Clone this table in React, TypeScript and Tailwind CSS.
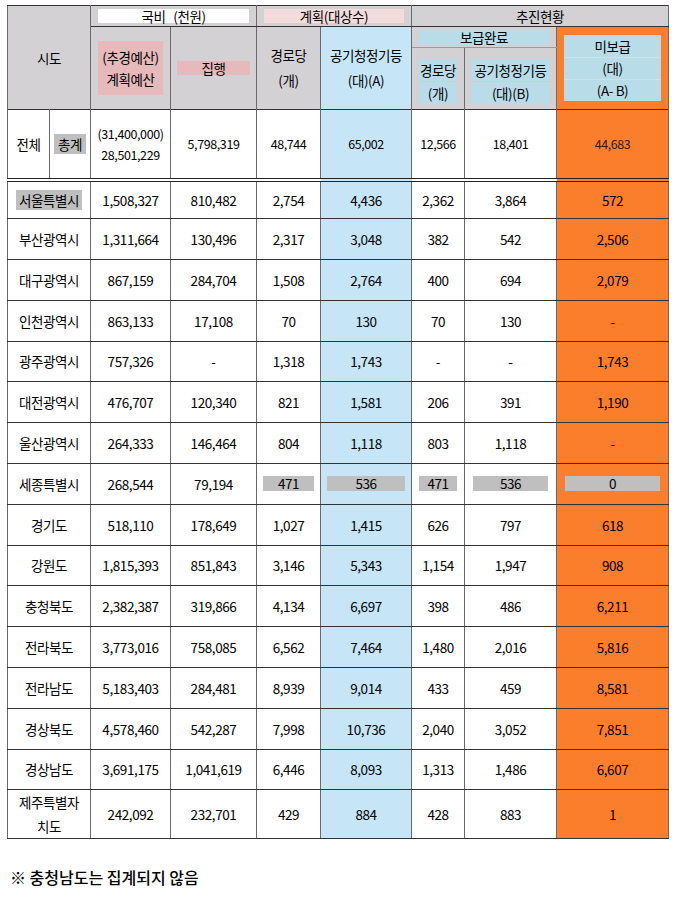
import React from "react";

const rows: string[][] = [
  ["서울특별시", "1,508,327", "810,482", "2,754", "4,436", "2,362", "3,864", "572"],
  ["부산광역시", "1,311,664", "130,496", "2,317", "3,048", "382", "542", "2,506"],
  ["대구광역시", "867,159", "284,704", "1,508", "2,764", "400", "694", "2,079"],
  ["인천광역시", "863,133", "17,108", "70", "130", "70", "130", "-"],
  ["광주광역시", "757,326", "-", "1,318", "1,743", "-", "-", "1,743"],
  ["대전광역시", "476,707", "120,340", "821", "1,581", "206", "391", "1,190"],
  ["울산광역시", "264,333", "146,464", "804", "1,118", "803", "1,118", "-"],
  ["세종특별시", "268,544", "79,194", "471", "536", "471", "536", "0"],
  ["경기도", "518,110", "178,649", "1,027", "1,415", "626", "797", "618"],
  ["강원도", "1,815,393", "851,843", "3,146", "5,343", "1,154", "1,947", "908"],
  ["충청북도", "2,382,387", "319,866", "4,134", "6,697", "398", "486", "6,211"],
  ["전라북도", "3,773,016", "758,085", "6,562", "7,464", "1,480", "2,016", "5,816"],
  ["전라남도", "5,183,403", "284,481", "8,939", "9,014", "433", "459", "8,581"],
  ["경상북도", "4,578,460", "542,287", "7,998", "10,736", "2,040", "3,052", "7,851"],
  ["경상남도", "3,691,175", "1,041,619", "6,446", "8,093", "1,313", "1,486", "6,607"],
];

const cell = "border border-x-[#6a6a6a] border-y-[#333] p-0 text-center align-middle font-normal";
const gray = "bg-[#d3d1d3]";
const blue = "bg-[#c6e6f8]";
const orange = "bg-[#fb7e2c]";
const dbl = "border-b-4 border-double border-b-[#222]";

// gray chip used in the 세종 row
function Chip({ text, w }: { text: string; w: string }) {
  return <div className={`mx-auto h-[15px] bg-[#bfbfbf] leading-[15px] ${w}`}>{text}</div>;
}

export default function App() {
  return (
    <div className="w-[680px] h-[899px] bg-white pt-[5px] pl-[7px] text-black font-['Noto_Sans_CJK_KR','Noto_Sans',sans-serif] tracking-[-0.4px]">
      <table className="table-fixed border-collapse w-[661px] text-[13.5px]">
        <colgroup>
          <col className="w-[42px]" />
          <col className="w-[41px]" />
          <col className="w-[80px]" />
          <col className="w-[86px]" />
          <col className="w-[64px]" />
          <col className="w-[91px]" />
          <col className="w-[53px]" />
          <col className="w-[92px]" />
          <col className="w-[112px]" />
        </colgroup>
        <thead>
          <tr className="h-[19px]">
            <th colSpan={2} rowSpan={3} className={`${cell} ${gray}`}>시도</th>
            <th colSpan={2} className={`${cell} ${gray}`}>
              <div className="mx-[7px] bg-white leading-[14px] whitespace-pre">국비   (천원)</div>
            </th>
            <th colSpan={2} className={`${cell} ${gray}`}>
              <div className="mx-[7px] bg-[#f3dcdc] leading-[14px]">계획(대상수)</div>
            </th>
            <th colSpan={3} className={`${cell} ${gray}`}>추진현황</th>
          </tr>
          <tr className="h-[21px]">
            <th rowSpan={2} className={`${cell} ${gray}`}>
              <div className="mx-[7px] bg-[#e6b9ba] py-[5px] leading-[22px]">
                (추경예산)
                <br />
                계획예산
              </div>
            </th>
            <th rowSpan={2} className={`${cell} ${gray}`}>
              <div className="mx-[6px] bg-[#e6b9ba] leading-[14px]">집행</div>
            </th>
            <th rowSpan={2} className={`${cell} ${gray} leading-[25px]`}>
              경로당
              <br />
              (개)
            </th>
            <th rowSpan={2} className={`${cell} ${blue} leading-[25px]`}>
              공기청정기등
              <br />
              (대)(A)
            </th>
            <th colSpan={2} className={`${cell} ${gray} border-b-[#9a9a9a]`}>
              <div className="mx-[7px] bg-[#b8dde8] leading-[15px]">보급완료</div>
            </th>
            <th rowSpan={2} className={`${cell} ${orange}`}>
              <div className="mx-[7px] bg-[#b8dde8] leading-[21px] pt-[1px]">
                <div className="border-b border-[#cde3ea]">미보급</div>
                <div className="border-b border-[#cde3ea]">(대)</div>
                <div>(A- B)</div>
              </div>
            </th>
          </tr>
          <tr className="h-[62px]">
            <th className={`${cell} ${gray} border-t-[#9a9a9a]`}>
              <div className="mx-[7px] mt-[6px] bg-[#b8dde8] leading-[22px]">
                <div className="border-b border-[#cfcfcf]">경로당</div>
                <div>(개)</div>
              </div>
            </th>
            <th className={`${cell} ${gray} border-t-[#9a9a9a]`}>
              <div className="mx-[6px] mt-[6px] bg-[#b8dde8] leading-[22px]">
                <div className="border-b border-[#cfcfcf]">공기청정기등</div>
                <div>(대)(B)</div>
              </div>
            </th>
          </tr>
        </thead>
        <tbody>
          <tr className="h-[70px] text-[12.5px]">
            <td className={`${cell} text-[13.5px] ${dbl}`}>전체</td>
            <td className={`${cell} text-[13.5px] ${dbl}`}>
              <span className="bg-[#bfbfbf] px-[4px]">총계</span>
            </td>
            <td className={`${cell} ${dbl} leading-[21px]`}>
              (31,400,000)
              <br />
              28,501,229
            </td>
            <td className={`${cell} ${dbl}`}>5,798,319</td>
            <td className={`${cell} ${dbl}`}>48,744</td>
            <td className={`${cell} ${blue} ${dbl}`}>65,002</td>
            <td className={`${cell} ${dbl}`}>12,566</td>
            <td className={`${cell} ${dbl}`}>18,401</td>
            <td className={`${cell} ${orange} ${dbl} text-[#3a1608]`}>44,683</td>
          </tr>
          {rows.map((r, i) => {
            const sejong = r[0] === "세종특별시";
            return (
              <tr key={r[0]} className={i === 0 ? "h-[39px]" : "h-[40.8px]"}>
                <td colSpan={2} className={cell}>
                  {i === 0 ? <span className="bg-[#bfbfbf] px-[3px]">{r[0]}</span> : r[0]}
                </td>
                <td className={cell}>{r[1]}</td>
                <td className={cell}>{r[2]}</td>
                <td className={cell}>{sejong ? <Chip text={r[3]} w="w-[51px]" /> : r[3]}</td>
                <td className={`${cell} ${blue}`}>{sejong ? <Chip text={r[4]} w="w-[78px]" /> : r[4]}</td>
                <td className={cell}>{sejong ? <Chip text={r[5]} w="w-[38px]" /> : r[5]}</td>
                <td className={cell}>{sejong ? <Chip text={r[6]} w="w-[75px]" /> : r[6]}</td>
                <td className={`${cell} ${orange}`}>{sejong ? <Chip text={r[7]} w="w-[95px]" /> : r[7]}</td>
              </tr>
            );
          })}
          <tr className="h-[49px]">
            <td colSpan={2} className={`${cell} leading-[24px]`}>
              제주특별자
              <br />
              치도
            </td>
            <td className={cell}>242,092</td>
            <td className={cell}>232,701</td>
            <td className={cell}>429</td>
            <td className={`${cell} ${blue}`}>884</td>
            <td className={cell}>428</td>
            <td className={cell}>883</td>
            <td className={`${cell} ${orange}`}>1</td>
          </tr>
        </tbody>
      </table>
      <p className="mt-[26px] pl-[3px] text-[16px] font-medium tracking-normal">※ 충청남도는 집계되지 않음</p>
    </div>
  );
}
